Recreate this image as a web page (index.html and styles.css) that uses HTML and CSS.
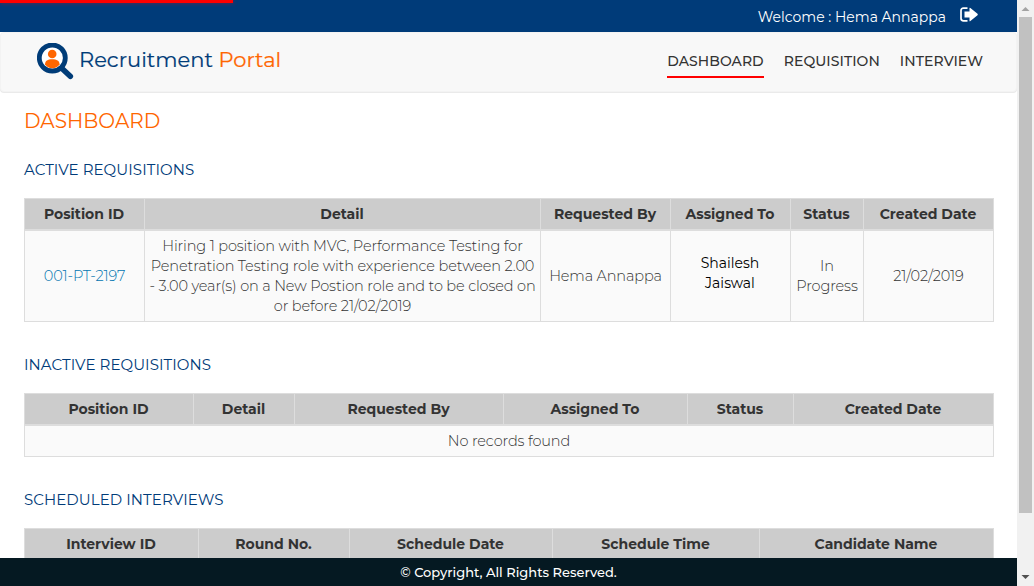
FILE: index.html
```html
<!DOCTYPE html>
<html lang="en">
<head>
<meta charset="utf-8">
<title>Recruitment Portal</title>
<link rel="stylesheet" href="styles.css">
</head>
<body>
<div class="window">
  <div class="page">
    <div class="progress"></div>
    <header class="topbar">
      <span class="welcome">Welcome : Hema Annappa</span>
      <svg class="logout" width="18" height="15" viewBox="0 0 18 15"><path d="M7.500 1.200H3.500Q1 1.200 1 3.500V11.500Q1 13.800 3.500 13.800H7.500" fill="none" stroke="#fff" stroke-width="1.700"/><path d="M4.500 4.500H9.500V1.300Q9.500 .3 10.400 1L17.500 6.800Q18.100 7.500 17.500 8.200L10.400 14Q9.500 14.700 9.500 13.700V10.500H4.500Z" fill="#fff"/></svg>
    </header>
    <nav class="navbar">
      <div class="brand">
        <svg width="37" height="37" viewBox="0 0 37 37"><path d="M25 25.500L33.300 33.300" stroke="#003c78" stroke-width="5.600" stroke-linecap="round"/><circle cx="15.300" cy="15" r="13" fill="#fff" stroke="#003c78" stroke-width="4.800"/><circle cx="15.200" cy="11" r="4.300" fill="#ff6600"/><path d="M8 21.200C8.300 17.800 10.500 16.300 15.200 16.300S22.300 17.800 22.600 21.200C21 23.700 18.500 25.200 15.300 25.200S9.600 23.700 8 21.200Z" fill="#ff6600"/></svg>
        <span class="brand-name">Recruitment <b>Portal</b></span>
      </div>
      <div class="links">
        <a class="active">DASHBOARD</a><a>REQUISITION</a><a>INTERVIEW</a>
      </div>
    </nav>
    <main class="content">
      <h1>DASHBOARD</h1>
      <h2>ACTIVE REQUISITIONS</h2>
      <table>
        <colgroup><col class="w120"><col class="w396"><col class="w130"><col class="w120"><col class="w73"><col class="w130"></colgroup>
        <thead><tr><th>Position ID</th><th>Detail</th><th>Requested By</th><th>Assigned To</th><th>Status</th><th>Created Date</th></tr></thead>
        <tbody><tr class="tall"><td class="id">001-PT-2197</td><td class="detail">Hiring 1 position with MVC, Performance Testing for<br>Penetration Testing role with experience between 2.00<br>- 3.00 year(s) on a New Postion role and to be closed on<br>or before 21/02/2019</td><td>Hema Annappa</td><td class="assignee"><div>Shailesh<br>Jaiswal</div></td><td>In<br>Progress</td><td>21/02/2019</td></tr></tbody>
      </table>
      <h2>INACTIVE REQUISITIONS</h2>
      <table>
        <colgroup><col class="w169"><col class="w101"><col class="w209"><col class="w184"><col class="w106"><col class="w200"></colgroup>
        <thead><tr><th>Position ID</th><th>Detail</th><th>Requested By</th><th>Assigned To</th><th>Status</th><th>Created Date</th></tr></thead>
        <tbody><tr><td colspan="6">No records found</td></tr></tbody>
      </table>
      <h2>SCHEDULED INTERVIEWS</h2>
      <table>
        <colgroup><col class="w174"><col class="w151"><col class="w203"><col class="w207"><col class="w234"></colgroup>
        <thead><tr><th>Interview ID</th><th>Round No.</th><th>Schedule Date</th><th>Schedule Time</th><th>Candidate Name</th></tr></thead>
      </table>
    </main>
    <footer class="footer">© Copyright, All Rights Reserved.</footer>
  </div>
  <aside class="scrollbar">
    <svg width="17" height="17"><path d="M4.500 11L8.500 7L12.500 11Z" fill="#a3a3a3"/></svg>
    <div class="thumb"></div>
    <svg width="17" height="17"><path d="M4.500 6L8.500 10L12.500 6Z" fill="#505050"/></svg>
  </aside>
</div>
</body>
</html>
```

FILE: styles.css
```css
* { box-sizing: border-box; }
body { margin: 0; font-family: Montserrat, Inter, "Open Sans", sans-serif; font-size: 14px; line-height: 20px; color: #333; background: #fff; overflow: hidden; }
.window { display: flex; width: 1034px; height: 586px; }
.page { position: relative; width: 1017px; display: flex; flex-direction: column; }
.progress { position: absolute; left: 0; top: 0; width: 233px; height: 3px; background: #f00; box-shadow: 0 0 4px rgba(255, 0, 0, .5); }
.topbar { height: 32px; flex: none; background: #003b79; color: #fff; display: flex; justify-content: flex-end; padding: 7px 39px 0 0; gap: 14px; }
.welcome { white-space: nowrap; }
.navbar { height: 60px; flex: none; background: #f8f8f8; border: 1px solid #f3f3f3; border-radius: 4px; box-shadow: 0 1px 0 #eaeaea; display: flex; justify-content: space-between; align-items: flex-start; padding: 9px 33px 0 36px; }
.brand { display: flex; gap: 5px; color: #003c78; }
.brand svg { margin-top: 1px; }
.brand-name { font-size: 21px; line-height: 36px; font-weight: 400; white-space: nowrap; -webkit-text-stroke: .2px; }
.brand-name b { font-weight: 400; color: #ff6600; }
.links { display: flex; gap: 20px; font-weight: 500; padding-top: 9px; white-space: nowrap; letter-spacing: .06px; }
.links a { height: 27px; }
.links .active { border-bottom: 2px solid #f00; }
.content { flex: 1; min-height: 0; overflow: hidden; padding: 16px 23px 0 24px; }
h1 { margin: 0; font-size: 20px; line-height: 26px; font-weight: 400; color: #ff6600; }
h2 { margin: 32px 0 18px; font-size: 15px; line-height: 20px; padding-top: 1px; font-weight: 400; color: #003b79; letter-spacing: .07px; }
h1 + h2 { margin-top: 25px; }
table { width: 970px; table-layout: fixed; border-collapse: separate; border-spacing: 0; border-right: 1px solid #ddd; }
th, td { padding: 0; text-align: center; vertical-align: middle; border-left: 1px solid #ddd; white-space: nowrap; }
th { height: 33px; background: #ccc; border-top: 1px solid #ddd; border-bottom: 2px solid #ddd; font-weight: 700; padding-right: 1px; }
td { height: 31px; background: #fafafa; border-bottom: 1px solid #ddd; font-size: 14.500px; font-weight: 300; letter-spacing: -.13px; }
.tall td { height: 91px; }
.tall .id { color: #0275b0; }
.tall .assignee { color: #000; font-size: 14px; font-weight: 400; letter-spacing: 0; padding-right: 1px; }
.assignee div { padding-bottom: 6px; }
.w73 { width: 73px; } .w101 { width: 101px; } .w106 { width: 106px; } .w120 { width: 120px; } .w130 { width: 130px; }
.w151 { width: 151px; } .w169 { width: 169px; } .w174 { width: 174px; } .w184 { width: 184px; } .w200 { width: 200px; } .w203 { width: 203px; }
.w207 { width: 207px; } .w209 { width: 209px; } .w234 { width: 234px; } .w396 { width: 396px; }
.footer { height: 28px; flex: none; background: #051922; color: #fff; text-align: center; font-size: 13px; line-height: 29px; font-weight: 500; }
.scrollbar { width: 17px; background: #f1f1f1; display: flex; flex-direction: column; }
.scrollbar svg { display: block; flex: none; }
.thumb { width: 13px; height: 496px; margin: 0 2px auto; background: #c1c1c1; }
```
